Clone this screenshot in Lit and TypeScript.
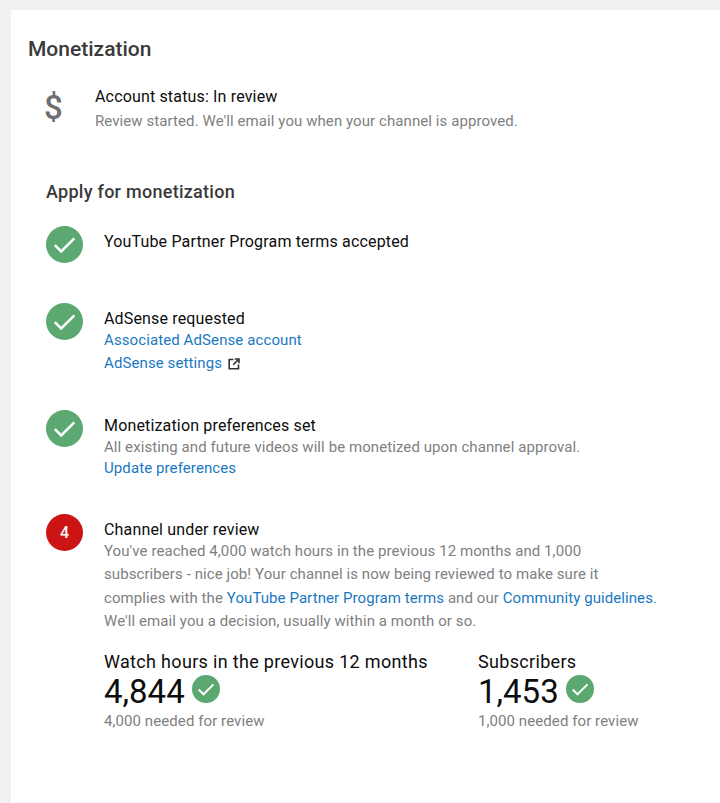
import {css, html, LitElement, svg, type TemplateResult} from 'lit';
import {customElement} from 'lit/decorators.js';

const check = (size: number): TemplateResult => html`
    <svg class="check" width=${size} height=${size} viewBox="0 0 36 36">
        <circle cx="18" cy="18" r="18" fill="#5ba870"></circle>
        ${svg`<path d="M8.6 18.6l6.2 6.2L27.6 12" fill="none" stroke="#fff" stroke-width="2.5"></path>`}
    </svg>`;

@customElement('app-root')
export class AppRoot extends LitElement {

    static styles = css`
        :host {
            display: block;
            height: 803px;
            overflow: hidden;
            box-sizing: border-box;
            padding: 10px 0 0 11px;
            background: #f1f1f1;
            font-family: Roboto, sans-serif;
            color: #0d0d0d;
        }
        .card {
            height: 793px;
            box-sizing: border-box;
            padding: 26px 0 0 17px;
            background: #fff;
        }
        h1 {
            margin: 0;
            font-size: 21px;
            line-height: 26px;
            font-weight: 500;
            color: #3a3a3a;
        }
        .status {
            display: flex;
            margin: 24px 0 0 17px;
        }
        .dollar {
            width: 50px;
            flex: none;
            margin-left: -1px;
            margin-right: 1px;
            font-size: 33px;
            line-height: 40px;
            color: #6f6f6f;
            font-weight: 500;
            margin-top: 2px;
        }
        .title {
            font-size: 16px;
            line-height: 22px;
            letter-spacing: 0.16px;
        }
        .muted {
            font-size: 15px;
            line-height: 22px;
            letter-spacing: 0.08px;
            color: #808080;
        }
        .status .muted {
            margin-top: 2px;
        }
        h2 {
            margin: 47px 0 0 18px;
            font-size: 18px;
            line-height: 26px;
            letter-spacing: 0.27px;
            font-weight: 500;
            color: #3a3a3a;
        }
        .steps {
            display: flex;
            flex-direction: column;
            margin: 21px 0 0 18px;
        }
        .step {
            display: flex;
            gap: 21px;
        }
        .step.first {
            height: 77px;
        }
        .step.second {
            height: 107px;
        }
        .step.third {
            height: 104px;
        }
        .step-body {
            flex: 1;
            min-width: 0;
        }
        .step-title {
            margin-top: 5px;
            margin-bottom: -1px;
        }
        .check {
            display: block;
            flex: none;
        }
        .num {
            width: 37px;
            height: 37px;
            flex: none;
            border-radius: 50%;
            background: #cc1414;
            color: #fff;
            display: flex;
            align-items: center;
            justify-content: center;
            font-size: 16px;
            font-weight: 500;
        }
        .link {
            display: block;
            font-size: 15px;
            line-height: 22px;
            color: #1a78c2;
            letter-spacing: 0.1px;
        }
        .link.gap {
            margin-top: 1px;
        }
        .link.tight {
            margin-top: -1px;
        }
        .link svg {
            vertical-align: -2px;
            margin-left: 2px;
        }
        .inline {
            color: #1a78c2;
        }
        .para {
            line-height: 23.3px;
            white-space: nowrap;
        }
        .stats {
            display: flex;
            margin-top: 17px;
        }
        .stat {
            width: 374px;
        }
        .stat-label {
            font-size: 18px;
            line-height: 24px;
            letter-spacing: 0.32px;
        }
        .stat-value {
            display: flex;
            align-items: flex-start;
            gap: 7px;
            font-size: 33px;
            line-height: 38px;
            height: 36px;
            margin-top: -1px;
            margin-bottom: 1px;
        }
        .stat-value .check {
            margin-top: 2px;
        }
    `;

    render(): TemplateResult {
        return html`
            <div class="card">
                <h1>Monetization</h1>
                <div class="status">
                    <div class="dollar">$</div>
                    <div>
                        <div class="title">Account status: In review</div>
                        <div class="muted">Review started. We'll email you when your channel is approved.</div>
                    </div>
                </div>
                <h2>Apply for monetization</h2>
                <div class="steps">
                    <div class="step first">
                        ${check(37)}
                        <div class="step-body"><div class="title step-title">YouTube Partner Program terms accepted</div></div>
                    </div>
                    <div class="step second">
                        ${check(37)}
                        <div class="step-body">
                            <div class="title step-title">AdSense requested</div>
                            <a class="link">Associated AdSense account</a>
                            <a class="link gap">AdSense settings
                                <svg width="12" height="12" viewBox="0 0 12 12">
                                    <path d="M5.5 1.5H1.2v9.3h9.3V6.5M6.8 1h4.2v4.2M10.6 1.4L5.2 6.8" fill="none" stroke="#333" stroke-width="1.6"></path>
                                </svg>
                            </a>
                        </div>
                    </div>
                    <div class="step third">
                        ${check(37)}
                        <div class="step-body">
                            <div class="title step-title">Monetization preferences set</div>
                            <div class="muted">All existing and future videos will be monetized upon channel approval.</div>
                            <a class="link tight">Update preferences</a>
                        </div>
                    </div>
                    <div class="step">
                        <div class="num">4</div>
                        <div class="step-body">
                            <div class="title step-title">Channel under review</div>
                            <div class="muted para">
                                You've reached 4,000 watch hours in the previous 12 months and 1,000<br>
                                subscribers - nice job! Your channel is now being reviewed to make sure it<br>
                                complies with the <span class="inline">YouTube Partner Program terms</span> and our <span class="inline">Community guidelines</span>.<br>
                                We'll email you a decision, usually within a month or so.
                            </div>
                            <div class="stats">
                                <div class="stat">
                                    <div class="stat-label">Watch hours in the previous 12 months</div>
                                    <div class="stat-value">4,844 ${check(28)}</div>
                                    <div class="muted">4,000 needed for review</div>
                                </div>
                                <div>
                                    <div class="stat-label">Subscribers</div>
                                    <div class="stat-value">1,453 ${check(28)}</div>
                                    <div class="muted">1,000 needed for review</div>
                                </div>
                            </div>
                        </div>
                    </div>
                </div>
            </div>
        `;
    }
}
